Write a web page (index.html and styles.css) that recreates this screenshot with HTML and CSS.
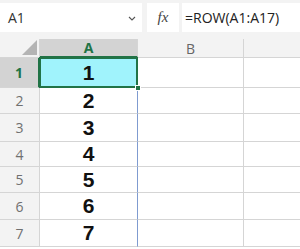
FILE: index.html
```html
<!DOCTYPE html>
<html>
	<head>
		<meta charset="UTF-8">
		<title>ROW</title>
		<link rel="stylesheet" href="styles.css">
	</head>
	<body>
		<div class="bar">
			<div class="namebox">
				<span>A1</span>
				<svg class="chev" width="8" height="5" viewBox="0 0 8 5"><path d="M1 1 L4 4 L7 1" fill="none" stroke="#555" stroke-width="1.1"/></svg>
			</div>
			<div class="fx"><i>fx</i></div>
			<div class="formula">=ROW(A1:A17)</div>
		</div>
		<div class="sheet">
			<div class="corner"><span class="tri"></span></div>
			<div class="colhead sel">A</div>
			<div class="colhead">B</div>
			<div class="colhead last"></div>

			<div class="rowhead sel">1</div>
			<div class="cell a active">1</div>
			<div class="cell"></div>
			<div class="cell last"></div>

			<div class="rowhead">2</div>
			<div class="cell a">2</div>
			<div class="cell"></div>
			<div class="cell last"></div>

			<div class="rowhead">3</div>
			<div class="cell a">3</div>
			<div class="cell"></div>
			<div class="cell last"></div>

			<div class="rowhead">4</div>
			<div class="cell a">4</div>
			<div class="cell"></div>
			<div class="cell last"></div>

			<div class="rowhead">5</div>
			<div class="cell a">5</div>
			<div class="cell"></div>
			<div class="cell last"></div>

			<div class="rowhead">6</div>
			<div class="cell a">6</div>
			<div class="cell"></div>
			<div class="cell last"></div>

			<div class="rowhead">7</div>
			<div class="cell a">7</div>
			<div class="cell"></div>
			<div class="cell last"></div>
		</div>
	</body>
</html>
```

FILE: styles.css
```css
body{
	margin: 0;
	background: #fff;
	font-family: "Open Sans", "Liberation Sans", sans-serif;
	overflow: hidden;
}
.bar{
	height: 39px;
	background: #f3f3f3;
	display: flex;
	align-items: flex-start;
	padding-top: 3px;
	box-sizing: border-box;
}
.namebox{
	width: 142px;
	height: 29px;
	background: #fff;
	display: flex;
	align-items: center;
	justify-content: space-between;
	padding: 0 6px 0 8px;
	box-sizing: border-box;
	font-size: 14px;
	color: #333;
}
.chev{
	margin-top: 1px;
}
.fx{
	width: 32px;
	height: 29px;
	margin-left: 5px;
	background: #fff;
	display: flex;
	align-items: center;
	justify-content: center;
	font-family: "Liberation Serif", serif;
	font-size: 15px;
	color: #444;
}
.formula{
	flex: 1;
	height: 29px;
	margin-left: 3px;
	background: #fff;
	display: flex;
	align-items: center;
	padding-left: 3px;
	font-size: 14px;
	color: #222;
}
.sheet{
	display: grid;
	grid-template-columns: 40px 98px 106px 1fr;
	grid-template-rows: 19px 30px 26px 28px 25px 26px 27px 27px;
}
.sheet > div{
	box-sizing: border-box;
	border-right: 1px solid #d5d5d5;
	border-bottom: 1px solid #d5d5d5;
}
.sheet > .last{
	border-right: none;
}
.corner{
	background: #f3f3f3;
	position: relative;
}
.tri{
	position: absolute;
	right: 2px;
	bottom: 2px;
	width: 0;
	height: 0;
	border-left: 15px solid transparent;
	border-bottom: 15px solid #b4b4b4;
}
.colhead{
	background: #f3f3f3;
	display: flex;
	align-items: center;
	justify-content: center;
	font-size: 14px;
	color: #666;
}
.colhead.sel{
	background: #d3d3d3;
	color: #217346;
	font-weight: bold;
	border-bottom: 2px solid #217346;
}
.rowhead{
	background: #f3f3f3;
	display: flex;
	align-items: center;
	justify-content: center;
	font-size: 14px;
	color: #707070;
}
.rowhead.sel{
	background: #d3d3d3;
	color: #217346;
	font-weight: bold;
	border-right: 2px solid #217346;
}
.cell{
	background: #fff;
	display: flex;
	align-items: center;
	justify-content: center;
	font-family: "Liberation Sans", Arial, sans-serif;
	font-weight: bold;
	font-size: 21px;
	color: #111;
}
.cell.a{
	border-right-color: #7f9bd0;
}
.cell.active{
	background: #a0f3fc;
	position: relative;
}
.cell.active::before{
	content: "";
	position: absolute;
	left: -1px;
	top: -1px;
	right: -1px;
	bottom: -1px;
	border: 2px solid #217346;
}
.cell.active::after{
	content: "";
	position: absolute;
	right: -4px;
	bottom: -4px;
	width: 6px;
	height: 6px;
	background: #217346;
	border: 1px solid #fff;
	box-sizing: border-box;
	z-index: 2;
}
```
